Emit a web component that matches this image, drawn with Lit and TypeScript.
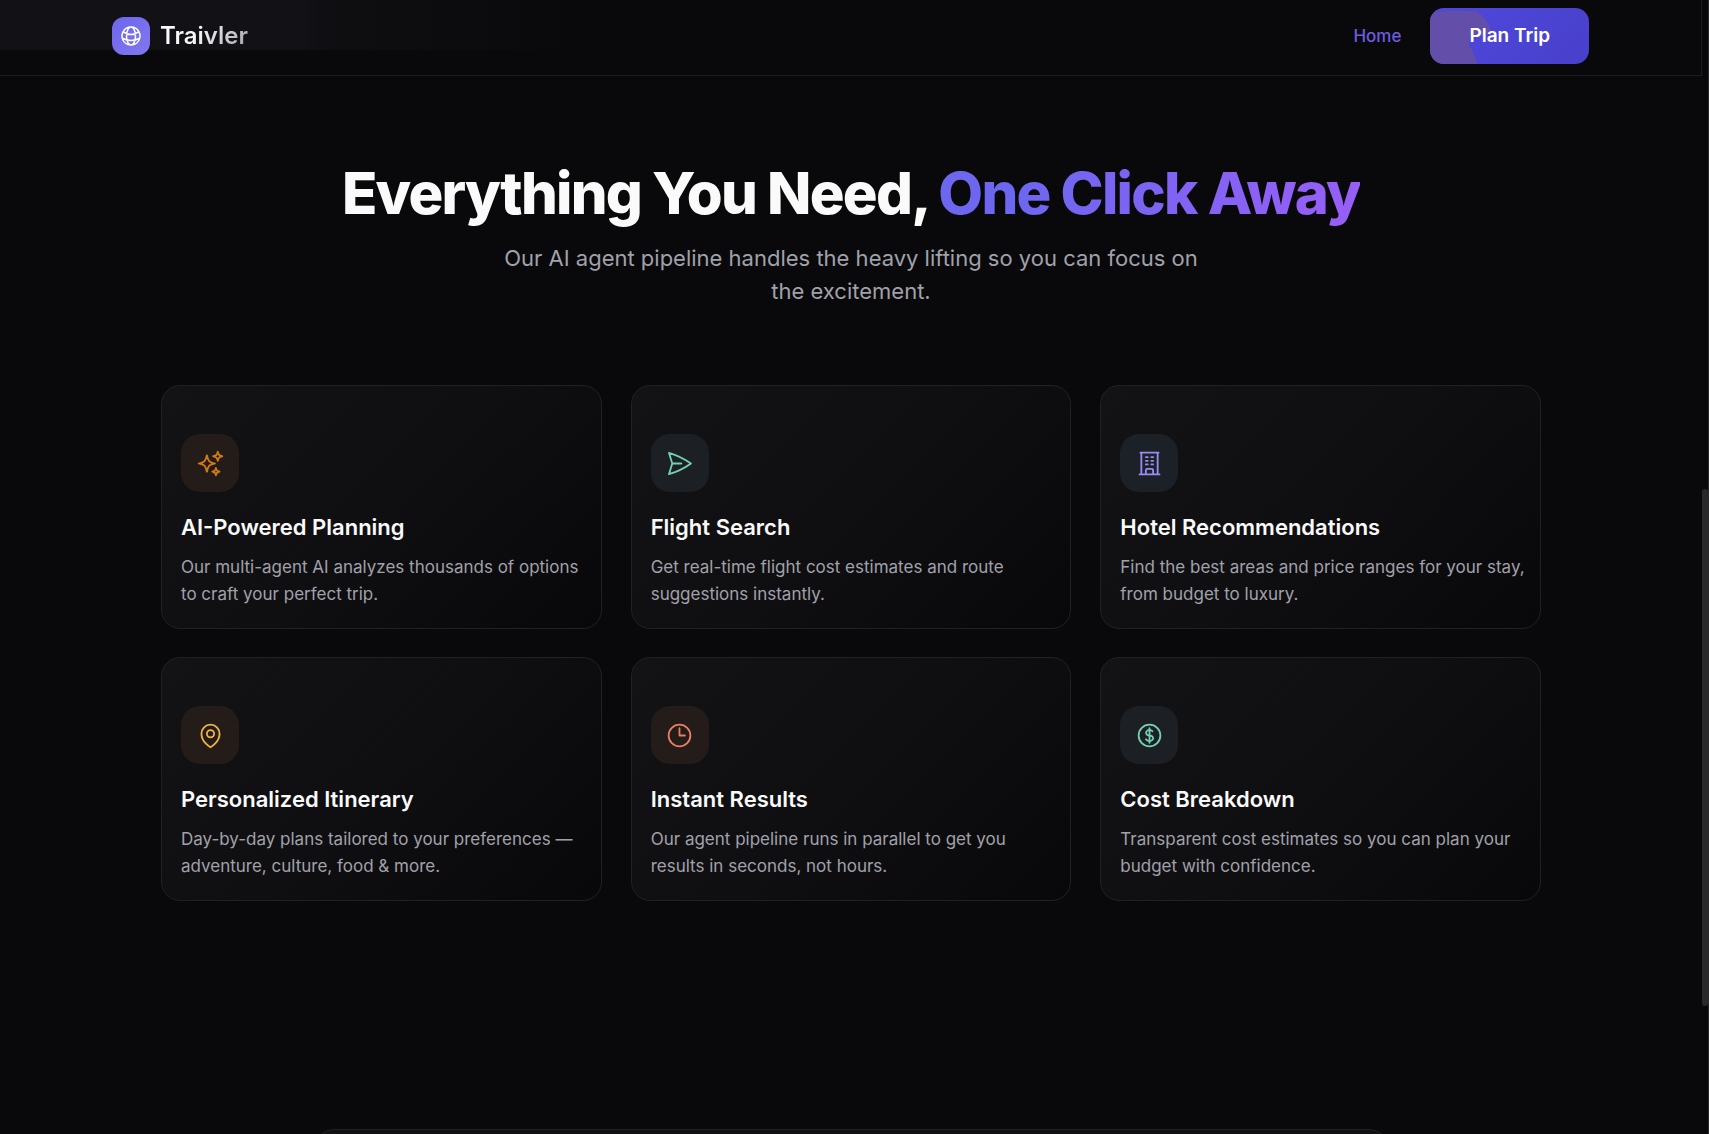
import { LitElement, html, css, svg } from "lit";
import { customElement, property } from "lit/decorators.js";

interface Feature {
  title: string;
  text: string;
  tone: string;
  icon: string;
}

const icons: Record<string, string[]> = {
  globe: [
    "M12 21a9.004 9.004 0 0 0 8.716-6.747M12 21a9.004 9.004 0 0 1-8.716-6.747M12 21c2.485 0 4.5-4.03 4.5-9S14.485 3 12 3m0 18c-2.485 0-4.5-4.03-4.5-9S9.515 3 12 3m0 0a8.997 8.997 0 0 1 7.843 4.582M12 3a8.997 8.997 0 0 0-7.843 4.582m15.686 0A11.953 11.953 0 0 1 12 10.5c-2.998 0-5.74-1.1-7.843-2.918m15.686 0A8.959 8.959 0 0 1 21 12c0 .778-.099 1.533-.284 2.253m0 0A17.919 17.919 0 0 1 12 16.5c-3.162 0-6.133-.815-8.716-2.247m0 0A9.015 9.015 0 0 1 3 12c0-1.605.42-3.113 1.157-4.418",
  ],
  sparkles: [
    "M9.813 15.904 9 18.75l-.813-2.846a4.5 4.5 0 0 0-3.09-3.09L2.25 12l2.846-.813a4.5 4.5 0 0 0 3.09-3.09L9 5.25l.813 2.846a4.5 4.5 0 0 0 3.09 3.09L15.75 12l-2.846.813a4.5 4.5 0 0 0-3.09 3.09Z",
    "M18.259 8.715 18 9.75l-.259-1.035a3.375 3.375 0 0 0-2.455-2.456L14.25 6l1.036-.259a3.375 3.375 0 0 0 2.455-2.456L18 2.25l.259 1.035a3.375 3.375 0 0 0 2.456 2.456L21.75 6l-1.035.259a3.375 3.375 0 0 0-2.456 2.456Z",
    "M16.894 20.567 16.5 21.75l-.394-1.183a2.25 2.25 0 0 0-1.423-1.423L13.5 18.75l1.183-.394a2.25 2.25 0 0 0 1.423-1.423l.394-1.183.394 1.183a2.25 2.25 0 0 0 1.423 1.423l1.183.394-1.183.394a2.25 2.25 0 0 0-1.423 1.423Z",
  ],
  plane: [
    "M6 12 3.269 3.125A59.769 59.769 0 0 1 21.485 12 59.768 59.768 0 0 1 3.27 20.875L5.999 12Zm0 0h7.5",
  ],
  building: [
    "M3.75 21h16.5M4.5 3h15M5.25 3v18m13.5-18v18M9 6.75h1.5m-1.5 3h1.5m-1.5 3h1.5m3-6H15m-1.5 3H15m-1.5 3H15M9 21v-3.375c0-.621.504-1.125 1.125-1.125h3.75c.621 0 1.125.504 1.125 1.125V21",
  ],
  pin: [
    "M15 10.5a3 3 0 1 1-6 0 3 3 0 0 1 6 0Z",
    "M19.5 10.5c0 7.142-7.5 11.25-7.5 11.25S4.5 17.642 4.5 10.5a7.5 7.5 0 1 1 15 0Z",
  ],
  clock: ["M12 6v6h4.5m4.5 0a9 9 0 1 1-18 0 9 9 0 0 1 18 0Z"],
  dollar: [
    "M12 6v12m-3-2.818.879.659c1.171.879 3.07.879 4.242 0 1.172-.879 1.172-2.303 0-3.182C13.536 12.219 12.768 12 12 12c-.725 0-1.45-.22-2.003-.659-1.106-.879-1.106-2.303 0-3.182s2.9-.879 4.006 0l.415.33M21 12a9 9 0 1 1-18 0 9 9 0 0 1 18 0Z",
  ],
};

const features: Feature[] = [
  {
    title: "AI-Powered Planning",
    text: "Our multi-agent AI analyzes thousands of options to craft your perfect trip.",
    tone: "orange",
    icon: "sparkles",
  },
  {
    title: "Flight Search",
    text: "Get real-time flight cost estimates and route suggestions instantly.",
    tone: "green",
    icon: "plane",
  },
  {
    title: "Hotel Recommendations",
    text: "Find the best areas and price ranges for your stay, from budget to luxury.",
    tone: "violet",
    icon: "building",
  },
  {
    title: "Personalized Itinerary",
    text: "Day-by-day plans tailored to your preferences — adventure, culture, food & more.",
    tone: "yellow",
    icon: "pin",
  },
  {
    title: "Instant Results",
    text: "Our agent pipeline runs in parallel to get you results in seconds, not hours.",
    tone: "coral",
    icon: "clock",
  },
  {
    title: "Cost Breakdown",
    text: "Transparent cost estimates so you can plan your budget with confidence.",
    tone: "green",
    icon: "dollar",
  },
];

@customElement("line-icon")
export class LineIcon extends LitElement {
  @property() name = "globe";

  static styles = css`
    :host {
      display: block;
    }
    .glyph {
      display: block;
      width: 100%;
      height: 100%;
      fill: none;
      stroke: currentColor;
      stroke-width: var(--icon-stroke, 1.5);
      stroke-linecap: round;
      stroke-linejoin: round;
    }
  `;

  render() {
    return html`<svg class="glyph" viewBox="0 0 24 24" aria-hidden="true">
      ${(icons[this.name] ?? []).map((d) => svg`<path d=${d}></path>`)}
    </svg>`;
  }
}

@customElement("feature-card")
export class FeatureCard extends LitElement {
  @property({ attribute: false }) feature!: Feature;

  static styles = css`
    :host {
      display: block;
      box-sizing: border-box;
      padding: 48px 12px 20px 19px;
      border: 1px solid #212124;
      border-radius: 19px;
      background: linear-gradient(135deg, #131315 0%, #0f0f12 50%, #08080a 100%);
    }
    .tile {
      display: grid;
      place-items: center;
      width: 58px;
      height: 58px;
      border-radius: 19px;
      background: #241c19;
    }
    .icon {
      width: 29px;
      height: 29px;
    }
    .orange {
      color: #d27a18;
    }
    .yellow {
      color: #f0b445;
    }
    .coral {
      color: #e87d64;
    }
    .green {
      color: #74d0ae;
      background: #1c2025;
    }
    .violet {
      color: #9a8af5;
      background: #1c2027;
    }
    .title {
      margin: 20px 0 12px;
      font-size: 22px;
      line-height: 30px;
      font-weight: 600;
      color: #fafafa;
    }
    .text {
      margin: 0;
      font-size: 17px;
      line-height: 27px;
      color: #a1a1aa;
    }
  `;

  render() {
    const { title, text, tone, icon } = this.feature;
    return html`
      <div class="tile ${tone}"><line-icon class="icon" name=${icon}></line-icon></div>
      <h3 class="title">${title}</h3>
      <p class="text">${text}</p>
    `;
  }
}

@customElement("app-root")
export class AppRoot extends LitElement {
  static styles = css`
    :host {
      display: grid;
      grid-template-columns: minmax(0, 1fr) 7px;
      grid-template-rows: minmax(0, 1fr);
      height: 100vh;
      overflow: hidden;
      background: #09090b;
      color: #fafafa;
      font-family: Inter, "Liberation Sans", sans-serif;
    }
    .page {
      display: flex;
      flex-direction: column;
      min-width: 0;
    }
    .header {
      flex: none;
      padding: 8px 112px 11px;
      border: solid #1d1d20;
      border-width: 0 1px 1px 0;
      background: linear-gradient(90deg, #111116 0, #111116 300px, #0e0e11 340px, #0c0c0e 460px, #09090b 590px)
        0 0 / 100% 50px no-repeat;
    }
    .bar {
      display: flex;
      align-items: center;
      justify-content: space-between;
    }
    .brand {
      display: flex;
      align-items: center;
      gap: 10px;
      text-decoration: none;
    }
    .badge {
      display: grid;
      place-items: center;
      width: 38px;
      height: 38px;
      border-radius: 12px;
      color: #ffffff;
      background: linear-gradient(135deg, #6d66ee, #8178ee);
    }
    .globe {
      width: 24px;
      height: 24px;
    }
    .name {
      font-size: 24px;
      line-height: 32px;
      font-weight: 600;
      color: transparent;
      background: linear-gradient(120deg, #fafafa 40%, #a1a1aa);
      background-clip: text;
      -webkit-background-clip: text;
    }
    .links {
      display: flex;
      align-items: center;
      gap: 29px;
    }
    .home {
      font-size: 17px;
      line-height: 24px;
      font-weight: 500;
      color: #6c5ce0;
      text-decoration: none;
    }
    .plan {
      position: relative;
      overflow: hidden;
      padding: 0 39px;
      height: 56px;
      border: 0;
      border-radius: 14px;
      font: 600 19px / 28px Inter, "Liberation Sans", sans-serif;
      color: #ffffff;
      background: linear-gradient(135deg, #4f48dc, #4840cb);
      cursor: pointer;
    }
    .glow {
      position: absolute;
      left: 0;
      top: 0;
      width: 64px;
      height: 56px;
    }
    .label {
      position: relative;
    }
    .features {
      flex: none;
      box-sizing: border-box;
      width: 100%;
      max-width: 1438px;
      margin: 0 auto;
      padding: 85px 29px 228px;
    }
    .heading {
      margin: 0;
      font-size: 58px;
      line-height: 64px;
      font-weight: 800;
      letter-spacing: -0.03em;
      text-align: center;
    }
    .accent {
      color: transparent;
      background: linear-gradient(100deg, #6d67f0 20%, #985ef8);
      background-clip: text;
      -webkit-background-clip: text;
    }
    .lead {
      max-width: 710px;
      margin: 17px auto 77px;
      font-size: 22px;
      line-height: 33px;
      color: #a1a1aa;
      text-align: center;
    }
    .grid {
      display: grid;
      grid-template-columns: repeat(3, minmax(0, 1fr));
      gap: 28px 29px;
    }
    .panel {
      flex: none;
      box-sizing: border-box;
      width: calc(100% - 58px);
      max-width: 1075px;
      height: 320px;
      margin: 0 auto;
      border: 1px solid #212124;
      border-radius: 20px;
      background: #111114;
    }
    .rail {
      display: flex;
      flex-direction: column;
      border-right: 1px solid #2a2a2c;
    }
    .before {
      flex: 489;
    }
    .thumb {
      flex: 517;
      border-radius: 3px;
      background: #29292c;
    }
    .after {
      flex: 128;
    }
  `;

  render() {
    return html`
      <div class="page">
        <header class="header">
          <nav class="bar">
            <a class="brand" href="#">
              <span class="badge"><line-icon class="globe" name="globe"></line-icon></span>
              <span class="name">Traivler</span>
            </a>
            <div class="links">
              <a class="home" href="#">Home</a>
              <button class="plan" type="button">
                <svg class="glow" viewBox="0 0 64 56" aria-hidden="true">
                  <path
                    fill="#634eaa"
                    d="M0 8Q5 3 14 3H46Q57 9 61 23L54 27 39 29V37Q45 46 47 56H0Z"
                  ></path>
                </svg>
                <span class="label">Plan Trip</span>
              </button>
            </div>
          </nav>
        </header>
        <section class="features">
          <h2 class="heading">Everything You Need, <span class="accent">One Click Away</span></h2>
          <p class="lead">
            Our AI agent pipeline handles the heavy lifting so you can focus on the excitement.
          </p>
          <div class="grid">
            ${features.map((f) => html`<feature-card .feature=${f}></feature-card>`)}
          </div>
        </section>
        <section class="panel"></section>
      </div>
      <div class="rail" aria-hidden="true">
        <div class="before"></div>
        <div class="thumb"></div>
        <div class="after"></div>
      </div>
    `;
  }
}
